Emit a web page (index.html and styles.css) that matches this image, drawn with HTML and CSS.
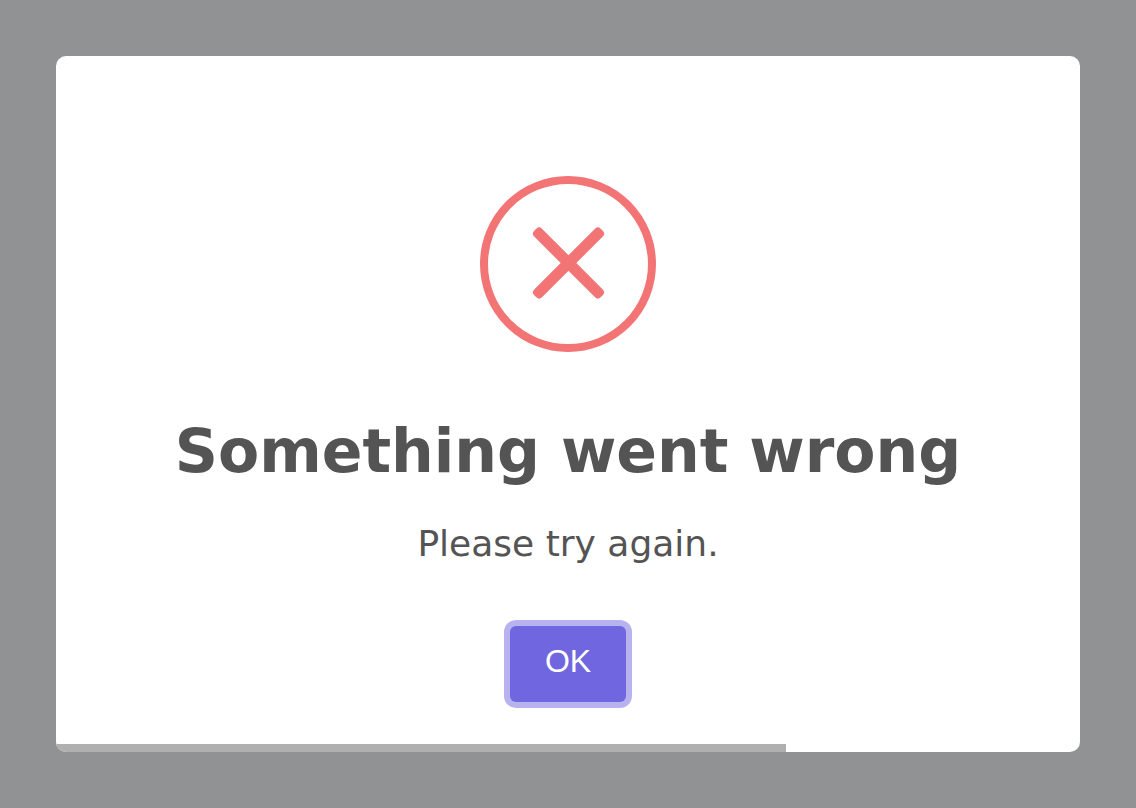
FILE: index.html
```html
<!DOCTYPE html>
<html lang="en">
<head>
    <meta charset="UTF-8">
    <title>Something went wrong</title>
    <link rel="stylesheet" href="styles.css">
</head>
<body>
    <div class="modal">
        <svg class="error-icon" width="176" height="176" viewBox="0 0 176 176">
            <circle cx="88" cy="88" r="84" fill="none" stroke="#f27474" stroke-width="8"/>
            <rect x="41.5" y="81.5" width="94" height="11" rx="4" fill="#f27474" transform="rotate(45 88.5 87)"/>
            <rect x="41.5" y="81.5" width="94" height="11" rx="4" fill="#f27474" transform="rotate(-45 88.5 87)"/>
        </svg>
        <h2 class="title">Something went wrong</h2>
        <div class="message">Please try again.</div>
        <button class="ok-button">OK</button>
        <div class="timer-bar"></div>
    </div>
</body>
</html>
```

FILE: styles.css
```css
html, body {
    height: 100%;
}
body {
    margin: 0;
    padding: 56px;
    box-sizing: border-box;
    background-color: #919293;
    font-family: "DejaVu Sans", sans-serif;
}
.modal {
    position: relative;
    height: 696px;
    padding-top: 120px;
    box-sizing: border-box;
    background-color: white;
    border-radius: 10px;
    overflow: hidden;
    display: flex;
    flex-direction: column;
    align-items: center;
    color: #545454;
}
.error-icon {
    display: block;
}
.title {
    margin: 63px 0 0;
    font-size: 60px;
    line-height: 72px;
    font-weight: bold;
}
.message {
    margin-top: 30px;
    font-size: 36px;
    line-height: 54px;
}
.ok-button {
    margin-top: 55px;
    width: 116px;
    height: 76px;
    padding: 0 0 6px;
    border: none;
    border-radius: 6px;
    background-color: #7066e0;
    box-shadow: 0 0 0 6px #b8b3ef;
    color: white;
    font-family: "Liberation Sans", sans-serif;
    font-size: 32px;
}
.timer-bar {
    position: absolute;
    left: 0;
    bottom: 0;
    width: 730px;
    height: 8px;
    background-color: #b0b0b0;
}
```
